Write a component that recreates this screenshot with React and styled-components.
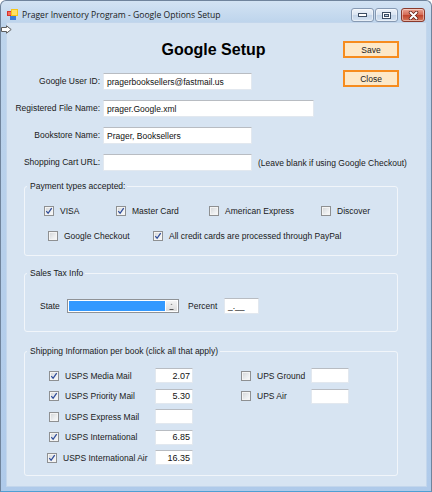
import { Fragment } from 'react'
import styled, { createGlobalStyle } from 'styled-components'

const GlobalStyle = createGlobalStyle`
  html, body {
    margin: 0;
    padding: 0;
  }
  body {
    font-family: "Liberation Sans", Arial, sans-serif;
    font-size: 8.5px;
    color: #1a1a1a;
  }
`

const Window = styled.div`
  position: relative;
  box-sizing: border-box;
  width: 432px;
  height: 492px;
  display: flex;
  flex-direction: column;
  padding: 0 5px 5px 6px;
  border: 1px solid #70849c;
  border-bottom-color: #4f9fd3;
  border-radius: 6px 6px 0 0;
  background: linear-gradient(180deg, #d3e3f3 0px, #bdd4ec 22px, #afcaea 100%);
  overflow: hidden;
`

const TitleBar = styled.div`
  height: 22px;
  display: flex;
  align-items: flex-start;
`

const AppIcon = styled.svg`
  width: 11px;
  height: 11px;
  margin-top: 8px;
  flex: none;
`

const TitleText = styled.div`
  margin: 9px 0 0 4px;
  font-family: "Open Sans", "Noto Sans", sans-serif;
  font-size: 8.6px;
  line-height: 11px;
  color: #1b1b1b;
  flex: 1;
  white-space: nowrap;
`

const CaptionButtons = styled.div`
  display: flex;
  gap: 1px;
  margin: 7px 1px 0 0;
`

const CaptionButton = styled.div`
  box-sizing: border-box;
  width: ${p => (p.$close ? '24px' : '23px')};
  height: 14px;
  margin-left: ${p => (p.$close ? '2px' : '0')};
  border: 1px solid ${p => (p.$close ? '#8a3a2c' : '#8699b2')};
  border-radius: 3px;
  background: ${p =>
    p.$close
      ? 'linear-gradient(180deg, #eba695 0%, #d46a54 48%, #c0432b 52%, #d4785c 100%)'
      : 'linear-gradient(180deg, #eef3fa 0%, #d9e4f1 48%, #c4d5e9 52%, #d5e3f2 100%)'};
  display: flex;
  align-items: center;
  justify-content: center;
  box-shadow: inset 0 0 0 1px rgba(255, 255, 255, 0.45);
`

const Cursor = styled.svg`
  position: absolute;
  left: 0;
  top: 24px;
  width: 11px;
  height: 9px;
`

const Client = styled.div`
  flex: 1;
  background: #d7e4f2;
  box-shadow: 0 0 0 1px #c3d6ec;
  display: flex;
  flex-direction: column;
`

const Form = styled.div`
  display: grid;
  grid-template-columns: 93px 1fr 56px;
  grid-template-rows: 29px repeat(4, 27px);
  column-gap: 3px;
  padding: 18px 27px 0 0;
`

const Heading = styled.h1`
  grid-column: 1 / 3;
  grid-row: 1;
  margin: 0;
  padding-left: 80px;
  align-self: start;
  text-align: center;
  font-size: 16px;
  line-height: 18px;
  font-weight: bold;
  color: #000;
`

const ActionButton = styled.button`
  grid-column: 3;
  grid-row: ${p => p.$row};
  align-self: start;
  box-sizing: border-box;
  width: 56px;
  height: 17px;
  padding: 0;
  border: 2px solid #f68c1f;
  background: #fde8c8;
  font-family: "Liberation Sans", Arial, sans-serif;
  font-size: 8.5px;
  color: #222;
`

const Label = styled.label`
  grid-column: 1;
  grid-row: ${p => p.$row};
  text-align: right;
  margin-top: 3px;
  line-height: 17px;
  white-space: nowrap;
`

const FieldCell = styled.div`
  grid-column: ${p => (p.$wide ? '2 / 4' : '2')};
  grid-row: ${p => p.$row};
  display: flex;
  align-items: center;
  gap: 6px;
  margin-top: 3px;
  height: 17px;
`

const TextBox = styled.div`
  box-sizing: border-box;
  width: ${p => p.$w}px;
  height: ${p => p.$h || 17}px;
  flex: none;
  background: #fff;
  border: 1px solid #e2e8ef;
  border-top-color: #b8bcc2;
  padding: 0 ${p => (p.$right ? 2 : 3)}px;
  display: flex;
  align-items: center;
  justify-content: ${p => (p.$right ? 'flex-end' : 'flex-start')};
  font-size: ${p => (p.$big ? '9px' : '8.5px')};
  color: #111;
  white-space: nowrap;
`

const Note = styled.span`
  white-space: nowrap;
`

const Group = styled.fieldset`
  margin: ${p => p.$top}px 28px 0 17px;
  padding: ${p => p.$pad};
  min-width: 0;
  border: 1px solid #f1f5fa;
  border-radius: 3px;
`

const Legend = styled.legend`
  margin-left: 2px;
  padding: 0 2px 0 3px;
  font-size: 8.5px;
  line-height: 10px;
`

const CheckRow = styled.div`
  display: flex;
  align-items: center;
  height: 14px;
  padding-left: ${p => p.$indent}px;
  & + & {
    margin-top: 11px;
  }
`

const CheckItem = styled.label`
  display: flex;
  align-items: center;
  gap: 6px;
  width: ${p => (p.$w ? `${p.$w}px` : 'auto')};
  margin-left: ${p => p.$shift || 0}px;
  flex: none;
  white-space: nowrap;
`

const Box = styled.span`
  box-sizing: border-box;
  width: 10px;
  height: 10px;
  flex: none;
  border: 1px solid #8e9092;
  background: linear-gradient(135deg, #d2d4d6 0%, #eceef0 60%, #fbfbfb 100%);
  box-shadow: inset 0 0 0 1px #f4f4f4;
  display: flex;
  align-items: center;
  justify-content: center;
`

const TaxRow = styled.div`
  display: flex;
  align-items: center;
  height: 16px;
  padding-left: 15px;
`

const StateLabel = styled.span`
  width: 27px;
`

const Combo = styled.div`
  box-sizing: border-box;
  width: 112px;
  height: 14px;
  border: 1px solid #8f9296;
  background: #fff;
  display: flex;
  padding: 1px;
  margin-right: 9px;
`

const ComboSelection = styled.div`
  flex: 1;
  background: #3399ff;
`

const ComboArrow = styled.div`
  width: 11px;
  margin-left: 1px;
  background: linear-gradient(180deg, #f3f3f3, #dcdcdc);
  display: flex;
  align-items: center;
  justify-content: center;
`

const PercentLabel = styled.span`
  width: 36px;
`

const ShipBody = styled.div`
  display: flex;
  padding-left: 24px;
  gap: 48px;
`

const ShipColumn = styled.div`
  display: grid;
  grid-template-columns: ${p => p.$labelW}px 38px;
  grid-auto-rows: 15px;
  row-gap: 5.5px;
  align-items: center;
  align-content: start;
`

function Check({ on }) {
  return (
    <Box>
      {on && (
        <svg width="8" height="8" viewBox="0 0 8 8">
          <path d="M1.3 4.2 L3.1 6.3 L6.7 1.2" fill="none" stroke="#2f4d9a" strokeWidth="1.3" />
        </svg>
      )}
    </Box>
  )
}

function CheckBox({ label, on, w, shift }) {
  return (
    <CheckItem $w={w} $shift={shift}>
      <Check on={on} />
      {label}
    </CheckItem>
  )
}

const shippingLeft = [
  { label: 'USPS Media Mail', on: true, value: '2.07' },
  { label: 'USPS Priority Mail', on: true, value: '5.30' },
  { label: 'USPS Express Mail', on: false, value: '' },
  { label: 'USPS International', on: true, value: '6.85' },
  { label: 'USPS International Air', on: true, value: '16.35', shift: -2 },
]

const shippingRight = [
  { label: 'UPS Ground', on: false, value: '' },
  { label: 'UPS Air', on: false, value: '' },
]

function ShipList({ items, labelW }) {
  return (
    <ShipColumn $labelW={labelW}>
      {items.map(s => (
        <Fragment key={s.label}>
          <CheckBox label={s.label} on={s.on} shift={s.shift} />
          <TextBox $w={38} $h={15} $right $big>{s.value}</TextBox>
        </Fragment>
      ))}
    </ShipColumn>
  )
}

export default function App() {
  return (
    <>
      <GlobalStyle />
      <Window>
        <TitleBar>
          <AppIcon viewBox="0 0 11 11">
            <rect x="0" y="2" width="5" height="5" fill="#d8332a" />
            <rect x="1" y="3" width="3" height="3" fill="#f26b5e" />
            <rect x="4" y="0" width="7" height="7" fill="#f5c518" />
            <rect x="5" y="1" width="5" height="5" fill="#ffe066" />
            <rect x="3" y="7" width="6" height="4" fill="#3b7bd8" />
          </AppIcon>
          <TitleText>Prager Inventory Program - Google Options Setup</TitleText>
          <CaptionButtons>
            <CaptionButton>
              <svg width="9" height="4" viewBox="0 0 9 4">
                <rect x="0.5" y="0.5" width="8" height="3" fill="#fff" stroke="#3c4d63" />
              </svg>
            </CaptionButton>
            <CaptionButton>
              <svg width="9" height="7" viewBox="0 0 9 7">
                <rect x="0.5" y="0.5" width="8" height="6" fill="#fff" stroke="#3c4d63" />
                <rect x="2.5" y="2.5" width="4" height="2" fill="#bccde2" stroke="#3c4d63" />
              </svg>
            </CaptionButton>
            <CaptionButton $close>
              <svg width="11" height="9" viewBox="0 0 11 9">
                <path d="M2.5 1.5 L8.5 7.5 M8.5 1.5 L2.5 7.5" stroke="#5a1b12" strokeWidth="3.4" strokeLinecap="round" />
                <path d="M2.5 1.5 L8.5 7.5 M8.5 1.5 L2.5 7.5" stroke="#fff" strokeWidth="2" strokeLinecap="round" />
              </svg>
            </CaptionButton>
          </CaptionButtons>
        </TitleBar>
        <Cursor viewBox="0 0 11 9">
          <path d="M0.5 2.5 H5.5 V0.8 L10.2 4.5 L5.5 8.2 V6.5 H0.5 Z" fill="#fff" stroke="#5d5d5d" strokeWidth="1" />
        </Cursor>

        <Client>
          <Form>
            <Heading>Google Setup</Heading>
            <ActionButton $row={1}>Save</ActionButton>

            <Label $row={2}>Google User ID:</Label>
            <FieldCell $row={2}>
              <TextBox $w={149}>pragerbooksellers@fastmail.us</TextBox>
            </FieldCell>
            <ActionButton $row={2}>Close</ActionButton>

            <Label $row={3}>Registered File Name:</Label>
            <FieldCell $row={3}>
              <TextBox $w={211}>prager.Google.xml</TextBox>
            </FieldCell>

            <Label $row={4}>Bookstore Name:</Label>
            <FieldCell $wide $row={4}>
              <TextBox $w={149}>Prager, Booksellers</TextBox>
            </FieldCell>

            <Label $row={5}>Shopping Cart URL:</Label>
            <FieldCell $wide $row={5}>
              <TextBox $w={149} />
              <Note>(Leave blank if using Google Checkout)</Note>
            </FieldCell>
          </Form>

          <Group $top={3} $pad="13px 0 12px 0">
            <Legend>Payment types accepted:</Legend>
            <CheckRow $indent={19}>
              <CheckBox label="VISA" on w={72} />
              <CheckBox label="Master Card" on w={93} />
              <CheckBox label="American Express" w={112} />
              <CheckBox label="Discover" />
            </CheckRow>
            <CheckRow $indent={23}>
              <CheckBox label="Google Checkout" w={105} />
              <CheckBox label="All credit cards are processed through PayPal" on />
            </CheckRow>
          </Group>

          <Group $top={12} $pad="20px 0 17px 0">
            <Legend>Sales Tax Info</Legend>
            <TaxRow>
              <StateLabel>State</StateLabel>
              <Combo>
                <ComboSelection />
                <ComboArrow>
                  <svg width="5" height="9" viewBox="0 0 5 9">
                    <path d="M2.5 1.5 L3.5 3 H1.5 Z" fill="#8a8a8a" />
                    <rect x="0.5" y="7" width="4" height="1" fill="#555" />
                  </svg>
                </ComboArrow>
              </Combo>
              <PercentLabel>Percent</PercentLabel>
              <TextBox $w={35} $h={16}>_.__</TextBox>
            </TaxRow>
          </Group>

          <Group $top={14} $pad="12px 0 10px 0">
            <Legend>Shipping Information per book (click all that apply)</Legend>
            <ShipBody>
              <ShipList items={shippingLeft} labelW={106} />
              <ShipList items={shippingRight} labelW={70} />
            </ShipBody>
          </Group>
        </Client>
      </Window>
    </>
  )
}
